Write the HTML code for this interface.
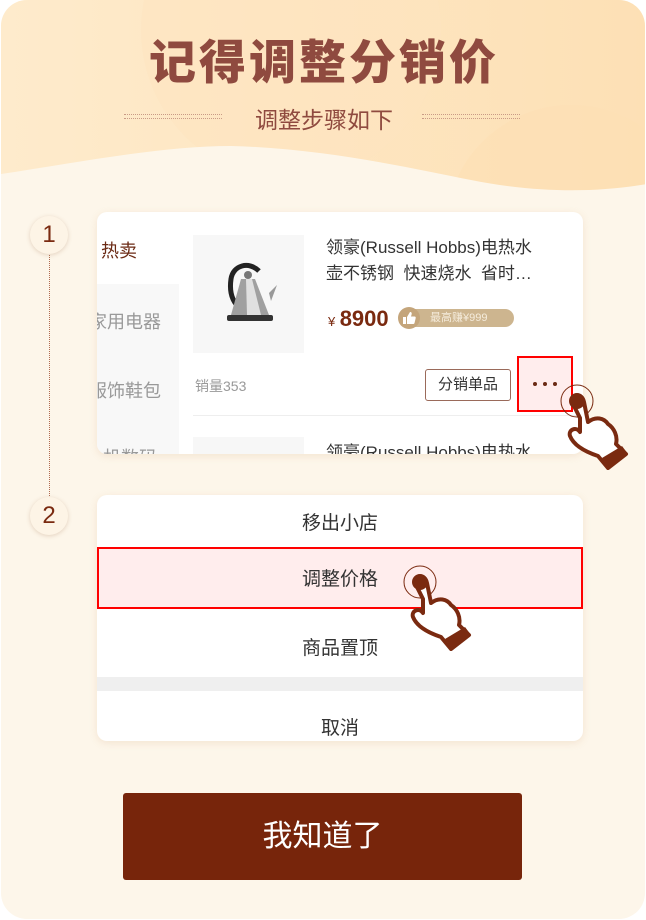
<!DOCTYPE html>
<html><head><meta charset="utf-8"><style>
*{margin:0;padding:0;box-sizing:border-box}
body{width:646px;height:920px;background:#fff;font-family:"Liberation Sans","Noto Sans CJK SC",sans-serif;overflow:hidden;position:relative}
.card{position:absolute;left:1px;top:0;width:644px;height:919px;border-radius:26px;background:#fdf6ea;overflow:hidden}
.abs{position:absolute}
.title{left:0;width:646px;top:24px;text-align:center;font-size:47px;font-weight:900;color:#8f4a3f;letter-spacing:3px}
.sub{left:0;width:646px;top:101px;text-align:center;font-size:23px;color:#8f4a3f}
.dl{height:5px;border-top:1px dotted #c99b86;border-bottom:1px dotted #c99b86;width:98px}
.num{width:38px;height:38px;border-radius:50%;background:#fdf4e6;box-shadow:0 1px 4px rgba(150,100,60,.25);color:#7a2a10;font-size:24px;text-align:center;line-height:38px}
.panel{background:#fff;border-radius:10px;box-shadow:0 2px 8px rgba(200,150,100,.18);overflow:hidden}
.hand{position:absolute}
.dot{position:absolute;width:4px;height:4px;border-radius:50%;background:#6b2a14;top:24px}
</style></head><body>
<div class="card">
<svg class="abs" style="left:0;top:0" width="646" height="230">
<defs><linearGradient id="bg" x1="0" y1="0" x2="1" y2="0"><stop offset="0" stop-color="#feebcc"/><stop offset="1" stop-color="#fde0b5"/></linearGradient></defs>
<rect width="646" height="230" fill="url(#bg)"/>
<circle cx="290" cy="30" r="150" fill="#fde4bf" opacity=".5"/>
<circle cx="570" cy="230" r="125" fill="#fedfb4" opacity=".6"/>
<path d="M0 174 C80 162 160 146 230 146 C320 148 410 168 470 180 C540 194 600 192 646 184 L646 230 L0 230Z" fill="#fdf6ea"/>
</svg>
<div class="abs title">记得调整分销价</div>
<div class="abs sub">调整步骤如下</div>
<div class="abs dl" style="left:123px;top:114px"></div>
<div class="abs dl" style="left:421px;top:114px"></div>
<div class="abs" style="left:48px;top:250px;height:262px;border-left:1px dotted #b06a50"></div>
<div class="abs num" style="left:29px;top:216px">1</div>
<div class="abs num" style="left:29px;top:497px">2</div>

<div class="abs panel" style="left:96px;top:212px;width:486px;height:242px">
 <div class="abs" style="left:0;top:72px;width:82px;height:180px;background:#f8f8f8"></div>
 <div class="abs" style="left:4px;top:25px;font-size:18px;color:#6b2a14">热卖</div>
 <div class="abs" style="left:-8px;top:96px;font-size:18px;color:#999">家用电器</div>
 <div class="abs" style="left:-8px;top:165px;font-size:18px;color:#999">服饰鞋包</div>
 <div class="abs" style="left:6px;top:232px;font-size:18px;color:#999">机数码</div>
 <div class="abs" style="left:96px;top:23px;width:111px;height:118px;background:#f7f7f7"></div>
 <svg class="abs" style="left:122px;top:45px" width="60" height="72"><path d="M40 14 C30 4 14 8 12 22 C10 36 14 46 22 52" stroke="#222" stroke-width="5" fill="none"/><path d="M22 22 L36 22 L50 58 L12 58Z" fill="#a0a0a0"/><path d="M27 22 L33 22 L42 58 L28 58Z" fill="#e0e0e0"/><circle cx="29" cy="18" r="4" fill="#777"/><path d="M50 36 L58 28 L52 44Z" fill="#999"/><rect x="8" y="58" width="46" height="6" rx="2" fill="#333"/></svg>
 <div class="abs" style="left:229px;top:23px;font-size:17px;line-height:26px;color:#333;width:250px">领豪(Russell Hobbs)电热水<br>壶不锈钢&nbsp; 快速烧水&nbsp; 省时…</div>
 <div class="abs" style="left:231px;top:94px;color:#7a2a10"><span style="font-size:13px">¥</span> <span style="font-size:22px;font-weight:bold">8900</span></div>
 <div class="abs" style="left:303px;top:97px;width:114px;height:18px;border-radius:9px;background:#cdb58f;color:#f5ecdc;font-size:11px;line-height:18px;padding-left:30px">最高赚¥999</div>
 <div class="abs" style="left:301px;top:95px;width:22px;height:22px;border-radius:50%;background:#c4a57b"></div>
 <svg class="abs" style="left:305px;top:99px" width="14" height="14"><path d="M1 6h3v7H1zM5 6l3-5c1.5 0 2 1 1.6 2.5L9 5.5h3.5c1 0 1.4.8 1.2 1.6l-1.2 5c-.2.6-.7.9-1.3.9H5z" fill="#fff"/></svg>
 <div class="abs" style="left:98px;top:164px;font-size:14px;color:#999">销量353</div>
 <div class="abs" style="left:328px;top:157px;width:86px;height:32px;border:1px solid #9a6a5a;border-radius:3px;font-size:15px;color:#333;text-align:center;line-height:30px">分销单品</div>
 <div class="abs" style="left:420px;top:144px;width:56px;height:56px;background:#ffeded;border:2px solid #f00">
  <div class="dot" style="left:14px"></div><div class="dot" style="left:24px"></div><div class="dot" style="left:34px"></div>
 </div>
 <div class="abs" style="left:96px;top:203px;width:390px;border-top:1px solid #eee"></div>
 <div class="abs" style="left:96px;top:225px;width:111px;height:40px;background:#f7f7f7"></div>
 <div class="abs" style="left:229px;top:226px;font-size:17px;color:#333">领豪(Russell Hobbs)电热水</div>
</div>

<div class="abs panel" style="left:96px;top:495px;width:486px;height:246px">
 <div class="abs" style="left:0;top:13px;width:486px;text-align:center;font-size:19px;color:#333">移出小店</div>
 <div class="abs" style="left:0;top:52px;width:486px;height:62px;background:#ffeded;border:2px solid #f00;text-align:center;font-size:19px;color:#333;line-height:62px">调整价格</div>
 <div class="abs" style="left:0;top:138px;width:486px;text-align:center;font-size:19px;color:#333">商品置顶</div>
 <div class="abs" style="left:0;top:182px;width:486px;height:14px;background:#efefef"></div>
 <div class="abs" style="left:0;top:218px;width:486px;text-align:center;font-size:19px;color:#333">取消</div>
</div>

<div class="abs" style="left:122px;top:793px;width:399px;height:87px;background:#77250b;border-radius:3px;color:#fff;font-size:30px;text-align:center;line-height:87px">我知道了</div>
</div>

<svg class="hand" style="left:560px;top:380px" width="72" height="90" viewBox="0 0 72 90">
<circle cx="17" cy="21" r="16" fill="none" stroke="#7a2a10" stroke-width="1"/>
<path d="M12 22 C10 14 22 12 24 22 L28 42 C36 36 44 38 48 44 C54 48 58 56 56 64 L66 74 L48 88 L38 76 C26 72 14 66 10 56 C8 50 16 46 20 52 L20 38Z" fill="#fff" stroke="#7a2a10" stroke-width="4" stroke-linejoin="round"/>
<circle cx="17" cy="21" r="8" fill="#7a2a10"/>
<path d="M42 78 L62 66 L68 74 L50 88Z" fill="#7a2a10"/>
</svg>
<svg class="hand" style="left:403px;top:561px" width="72" height="90" viewBox="0 0 72 90">
<circle cx="17" cy="21" r="16" fill="none" stroke="#7a2a10" stroke-width="1"/>
<path d="M12 22 C10 14 22 12 24 22 L28 42 C36 36 44 38 48 44 C54 48 58 56 56 64 L66 74 L48 88 L38 76 C26 72 14 66 10 56 C8 50 16 46 20 52 L20 38Z" fill="#fff" stroke="#7a2a10" stroke-width="4" stroke-linejoin="round"/>
<circle cx="17" cy="21" r="8" fill="#7a2a10"/>
<path d="M42 78 L62 66 L68 74 L50 88Z" fill="#7a2a10"/>
</svg>
</body></html>
